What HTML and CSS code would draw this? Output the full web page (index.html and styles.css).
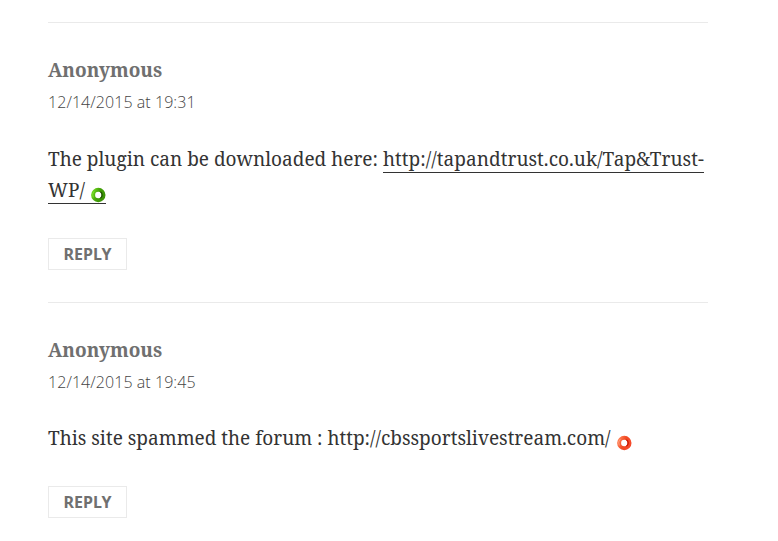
FILE: index.html
```html
<!DOCTYPE html>
<html lang="en">
<head>
<meta charset="utf-8">
<title>Comments</title>
<link rel="stylesheet" href="styles.css">
</head>
<body>
<main class="comments">
  <article class="comment">
    <h2 class="author">Anonymous</h2>
    <time class="date">12/14/2015 at 19:31</time>
    <p class="text">The plugin can be downloaded here: <a class="link" href="#">http://tapandtrust.co.uk/Tap&amp;Trust-<br>WP/ <svg class="ring" viewBox="0 0 16 16"><defs><linearGradient id="green" x1="0" y1="0.2" x2="1" y2="0.6"><stop offset="0" stop-color="#69cf1c"/><stop offset=".5" stop-color="#43a008"/><stop offset="1" stop-color="#3d9408"/></linearGradient></defs><circle cx="8.3" cy="8" r="5.2" fill="#fff" stroke="url(#green)" stroke-width="4"/><path d="M10.4 4.8A3.8 3.8 0 0 1 10.4 11.2" fill="none" stroke="#205204" stroke-width="1.3"/><path d="M3.3 10.5A5.6 5.6 0 0 1 4.3 4" fill="none" stroke="#7be02a" stroke-width="1"/></svg></a></p>
    <button class="reply">Reply</button>
  </article>
  <article class="comment">
    <h2 class="author">Anonymous</h2>
    <time class="date">12/14/2015 at 19:45</time>
    <p class="text">This site spammed the forum : http://cbssportslivestream.com/ <svg class="ring" viewBox="0 0 16 16"><defs><linearGradient id="red" x1="0" y1="0.2" x2="1" y2="0.6"><stop offset="0" stop-color="#ff7a50"/><stop offset=".5" stop-color="#f04a24"/><stop offset="1" stop-color="#f5492a"/></linearGradient></defs><circle cx="8.3" cy="8" r="5.2" fill="#fff" stroke="url(#red)" stroke-width="4"/><path d="M10.4 4.8A3.8 3.8 0 0 1 10.4 11.2" fill="none" stroke="#c51500" stroke-width="1.3"/><path d="M3.3 10.5A5.6 5.6 0 0 1 4.3 4" fill="none" stroke="#ffa080" stroke-width=".9"/></svg></p>
    <button class="reply">Reply</button>
  </article>
</main>
</body>
</html>
```
FILE: styles.css
```css
body { margin: 0; background: #fff; color: #333; font-family: "Noto Serif", "DejaVu Serif", serif; }
.comments { width: 660px; padding: 22px 0 0 48px; }
.comment { border-top: 1px solid #eaeaea; padding: 32px 0; }
.author { margin: 0; font-size: 19px; line-height: 31px; color: #707070; }
.date { display: block; font: 300 16px/32px "Open Sans", "Noto Sans", sans-serif; letter-spacing: .06px; color: #444; }
.text { margin: 25px 0 32px; font-size: 19px; line-height: 31px; white-space: nowrap; }
.comment:first-child .text { margin-top: 26px; }
.link { color: #333; text-decoration: none; border-bottom: 1px solid #333; letter-spacing: .045px; }
.ring { width: 16px; height: 16px; vertical-align: -6px; }
.reply { display: block; width: 79px; height: 32px; padding: 0; background: #fff; border: 1px solid #eaeaea; color: #707070; font: bold 16px "Noto Sans", sans-serif; text-transform: uppercase; }
```
